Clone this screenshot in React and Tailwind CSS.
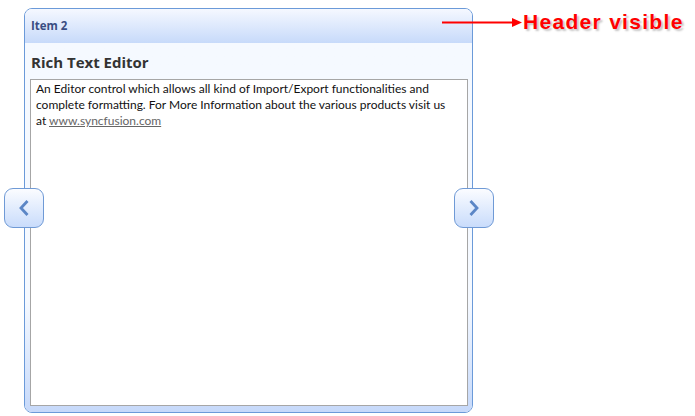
import React from "react";

function NavButton({ dir }) {
  return (
    <button
      type="button"
      className="flex h-[40px] w-[40px] items-center justify-center rounded-[9px] border border-[#6f9ad6] bg-gradient-to-b from-[#fbfcff] to-[#c9dcfb]"
    >
      <svg width="12" height="18" viewBox="0 0 12 18" fill="none">
        {dir === "left" ? (
          <path d="M9.5 2 L3 9 L9.5 16" stroke="#5b86c6" strokeWidth="2.8" />
        ) : (
          <path d="M2.5 2 L9 9 L2.5 16" stroke="#5b86c6" strokeWidth="2.8" />
        )}
      </svg>
    </button>
  );
}

export default function App() {
  return (
    <div className="relative h-[416px] w-[695px] overflow-hidden bg-white">
      <div className="ml-[24px] mt-[8px] flex h-[405px] w-[449px] flex-col overflow-hidden rounded-[8px] border border-[#6b9ad9]">
        <div className="flex h-[34px] shrink-0 items-center bg-gradient-to-b from-[#f5f8ff] to-[#c7dafa] px-[6px]">
          <span className="text-[11.5px] font-bold text-[#3a4d82] [font-family:'Open_Sans','Noto_Sans',sans-serif]">
            Item 2
          </span>
        </div>
        <div className="flex flex-1 flex-col bg-gradient-to-b from-[#f5f9ff] from-70% to-[#c6d9fa] px-[5px] pb-[6px] pr-[4px]">
          <div className="flex h-[36px] shrink-0 items-center pl-[1px] pt-[2px] text-[15px] font-bold text-[#333] [font-family:'Open_Sans','Noto_Sans',sans-serif]">
            Rich Text Editor
          </div>
          <div className="flex-1 whitespace-nowrap border border-[#a6a6a6] bg-white px-[5px] py-[1px] text-[12px] leading-[16px] text-[#111] [font-family:Lato,'Noto_Sans',sans-serif]">
            An Editor control which allows all kind of Import/Export functionalities and
            <br />
            complete formatting. For More Information about the various products visit us
            <br />
            at{" "}
            <a href="#" className="text-[#666] underline">
              www.syncfusion.com
            </a>
          </div>
        </div>
      </div>

      <div className="absolute left-[4px] top-[188px]">
        <NavButton dir="left" />
      </div>
      <div className="absolute left-[454px] top-[188px]">
        <NavButton dir="right" />
      </div>

      <div className="absolute left-[442px] top-[9px] flex items-center">
        <svg width="80" height="12" viewBox="0 0 80 12">
          <line x1="0" y1="6.5" x2="72" y2="6.5" stroke="#f00" strokeWidth="2" />
          <path d="M70 2 L80 6.5 L70 11 Z" fill="#f00" />
        </svg>
        <span className="ml-[1px] text-[21px] font-bold leading-[26px] tracking-[1.3px] text-[#ff0000] [font-family:'Liberation_Sans',Arial,sans-serif] [text-shadow:2px_2px_2px_#c4c4c4]">
          Header visible
        </span>
      </div>
    </div>
  );
}
